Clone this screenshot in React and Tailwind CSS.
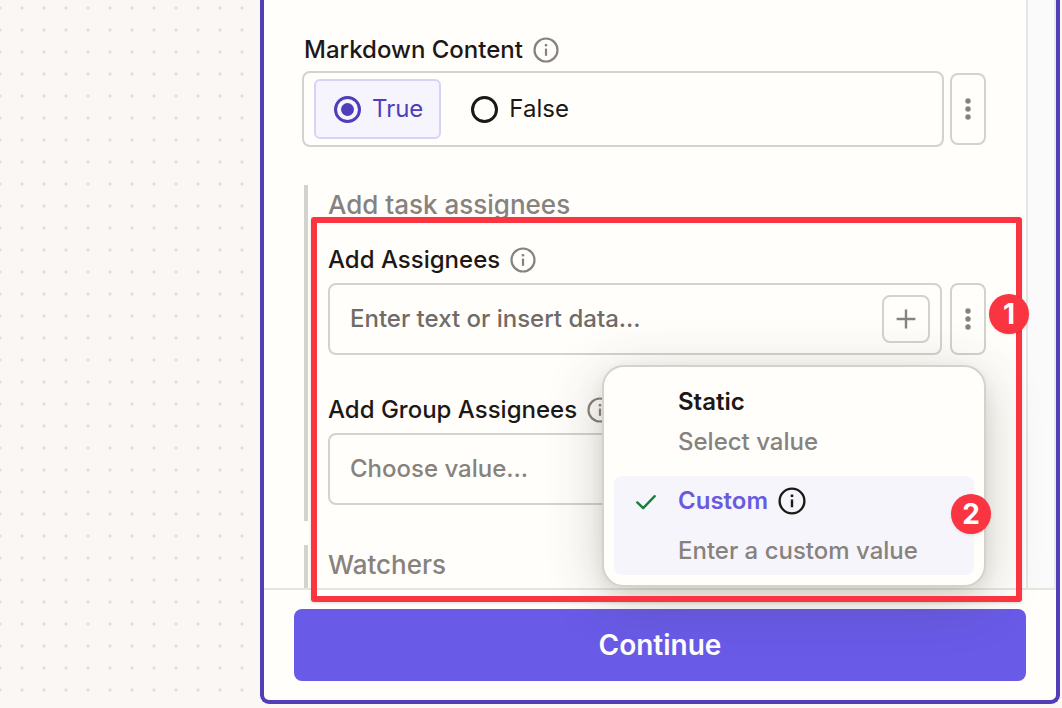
import React from "react";

function InfoIcon({ className }) {
  return (
    <svg viewBox="0 0 26 26" fill="none" aria-hidden="true" className={className}>
      <circle cx="13" cy="13" r="11.5" stroke="currentColor" strokeWidth="2.2" />
      <rect x="11.9" y="11.6" width="2.2" height="7.2" fill="currentColor" />
      <rect x="11.7" y="7" width="2.6" height="2.4" rx="0.8" fill="currentColor" />
    </svg>
  );
}

function KebabButton({ label }) {
  return (
    <button
      type="button"
      aria-label={label}
      className="flex h-[72px] w-9 shrink-0 items-center justify-center rounded-lg border-2 border-[#d4d2cd] text-[#87827d]"
    >
      <svg viewBox="0 0 6 24" fill="currentColor" className="h-6 w-1.5">
        <circle cx="3" cy="4" r="2.7" />
        <circle cx="3" cy="12" r="2.7" />
        <circle cx="3" cy="20" r="2.7" />
      </svg>
    </button>
  );
}

function FieldLabel({ children, htmlFor, id }) {
  const Text = htmlFor ? "label" : "span";
  return (
    <div className="flex h-8 items-center gap-2.5">
      <Text id={id} htmlFor={htmlFor} className="text-2xl font-medium whitespace-nowrap text-[#1d1816]">
        {children}
      </Text>
      <InfoIcon className="h-[26px] w-[26px] shrink-0 text-[#87827d]" />
    </div>
  );
}

function RadioOption({ label, defaultChecked }) {
  return (
    <label className="flex h-[60px] items-center gap-[11px] rounded-md border-2 border-transparent px-4 pl-[18px] text-2xl text-[#1d1816] has-checked:border-[#d8d3f6] has-checked:bg-[#f6f5fd] has-checked:text-[#503eb8]">
      <input
        type="radio"
        name="markdown"
        defaultChecked={defaultChecked}
        className="grid h-[27px] w-[27px] appearance-none place-items-center rounded-full border-3 border-current before:h-[13px] before:w-[13px] before:rounded-full checked:before:bg-current"
      />
      {label}
    </label>
  );
}

function MarkdownField() {
  return (
    <div role="radiogroup" aria-labelledby="markdown-label">
      <FieldLabel id="markdown-label">Markdown Content</FieldLabel>
      <div className="-ml-0.5 mt-[5px] flex items-center gap-1.5">
        <div className="flex h-[76px] flex-1 items-center gap-2.5 rounded-lg border-2 border-[#d4d2cd] px-2.5">
          <RadioOption label="True" defaultChecked />
          <RadioOption label="False" />
        </div>
        <KebabButton label="Markdown options" />
      </div>
    </div>
  );
}

function ModeMenu() {
  return (
    <div
      role="menu"
      className="absolute top-full right-0 z-10 mt-2.5 w-96 rounded-[22px] border-2 border-[#d4d2cd] bg-[#fffefb] px-2.5 pt-1 pb-2.5 shadow-[0_12px_56px_rgba(60,50,30,0.24),0_6px_14px_rgba(60,50,30,0.08)]"
    >
      <button type="button" role="menuitem" className="block w-full pt-[11px] pb-3.5 pl-16 text-left text-2xl">
        <span className="block h-10 leading-10 font-semibold text-[#1d1816]">Static</span>
        <span className="block h-10 leading-10 font-medium text-[#87827d]">Select value</span>
      </button>
      <button
        type="button"
        role="menuitem"
        className="relative block w-full rounded-lg bg-[#f6f5fc] pl-16 text-left text-2xl"
      >
        <svg
          viewBox="0 0 20 16"
          fill="none"
          stroke="#17803a"
          strokeWidth="2.4"
          strokeLinecap="round"
          strokeLinejoin="round"
          className="absolute top-[18px] left-[22px] h-4 w-5"
          aria-hidden="true"
        >
          <path d="M1.3 8.4 7.2 14.2 18.7 2.2" />
        </svg>
        <span className="flex h-[50px] items-center gap-2.5 font-semibold text-[#695be0]">
          Custom
          <InfoIcon className="h-7 w-7 text-[#1d1816]" />
        </span>
        <span className="flex h-[49px] items-center font-medium text-[#87827d]">Enter a custom value</span>
      </button>
    </div>
  );
}

function Badge({ children, className }) {
  return (
    <span
      className={
        "absolute z-30 flex h-10 w-10 items-center justify-center rounded-full bg-[#fa3441] text-[28px] font-bold text-white shadow-sm " +
        className
      }
    >
      {children}
    </span>
  );
}

function AssigneesGroup() {
  return (
    <section className="relative border-l-4 border-[#d4d2cd] pb-4 pl-5">
      <h3 className="h-10 text-[26px] leading-10 font-medium text-[#87827d]">Add task assignees</h3>
      <div className="mt-[19px]">
        <FieldLabel htmlFor="assignees">Add Assignees</FieldLabel>
        <div className="relative mt-[7px] flex gap-2">
          <div className="flex h-[72px] min-w-0 flex-1 items-center rounded-lg border-2 border-[#d4d2cd] pr-2.5 pl-5">
            <input
              id="assignees"
              type="text"
              placeholder="Enter text or insert data..."
              className="min-w-0 flex-1 bg-transparent text-2xl font-medium outline-none placeholder:text-[#706b67]"
            />
            <button
              type="button"
              aria-label="Insert data"
              className="flex h-12 w-12 items-center justify-center rounded-lg border-2 border-[#d4d2cd] text-[#87827d]"
            >
              <svg viewBox="0 0 20 20" stroke="currentColor" strokeWidth="2.4" className="h-5 w-5">
                <path d="M10 .6v18.8M.6 10h18.8" />
              </svg>
            </button>
          </div>
          <KebabButton label="Assignee options" />
          <ModeMenu />
        </div>
      </div>
      <div className="mt-[39px]">
        <FieldLabel htmlFor="groups">Add Group Assignees</FieldLabel>
        <div className="mt-[7px] flex gap-2">
          <select
            id="groups"
            className="h-[72px] min-w-0 flex-1 appearance-none rounded-lg border-2 border-[#d4d2cd] px-5 text-2xl font-medium text-[#87827d]"
          >
            <option>Choose value...</option>
          </select>
          <KebabButton label="Group options" />
        </div>
      </div>
      <div className="pointer-events-none absolute top-8 -right-9 -bottom-[81px] left-[3px] z-20 rounded-[3px] border-[6px] border-[#fa3441] shadow-[0_1px_3px_rgba(0,0,0,0.15)]" />
      <Badge className="top-[109px] -right-[43px]">1</Badge>
      <Badge className="top-[309px] -right-[5px]">2</Badge>
    </section>
  );
}

export default function App() {
  return (
    <main className="flex min-h-screen bg-[#faf7f5] bg-[radial-gradient(circle_at_center,#e2dddb_1px,transparent_2px)] bg-[length:22px_22px] bg-[position:11px_-3px] pr-0.5 pb-1 pl-[260px] font-['Inter',sans-serif]">
      <div className="flex min-w-0 flex-1 flex-col rounded-b-[9px] border-4 border-t-0 border-[#523eb5] bg-[#fffefb]">
        <div className="flex flex-1">
          <div className="flex min-w-0 flex-1 flex-col pt-[34px] pr-10 pl-10">
            <MarkdownField />
            <div className="mt-[38px]">
              <AssigneesGroup />
            </div>
            <section className="mt-6 flex-1 border-l-4 border-[#d4d2cd] pl-5">
              <h3 className="h-10 text-[26px] leading-10 font-medium text-[#87827d]">Watchers</h3>
            </section>
          </div>
          <div className="w-[30px] shrink-0 border-r-2 border-l-2 border-[#e6e6e6] border-r-[#e8e8ef] bg-[#fafafa]" />
        </div>
        <footer className="border-t-2 border-[#e6e5e2] px-[30px] pt-[19px] pb-[19px]">
          <button
            type="button"
            className="h-[72px] w-full rounded-lg bg-[#695be8] text-[28px] font-semibold text-[#fffefb]"
          >
            Continue
          </button>
        </footer>
      </div>
    </main>
  );
}
